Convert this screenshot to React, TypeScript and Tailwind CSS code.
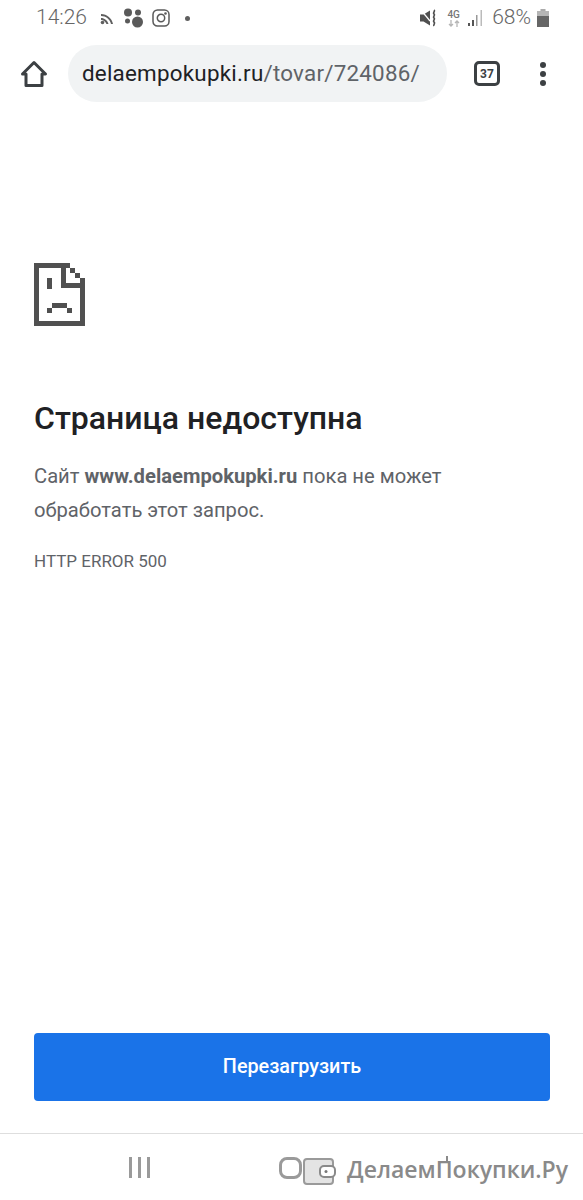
const FONT = { fontFamily: 'Roboto, sans-serif' }

function StatusBar() {
  return (
    <div className="flex h-9 shrink-0 items-center pl-9 pr-[34px] text-[21px] text-[#666666]">
      <span className="w-[64px] font-light">14:26</span>
      {/* cast */}
      <svg width="14" height="12" viewBox="0 0 14 12" className="mr-[9px] mt-px" fill="#5f5f5f">
        <path d="M1 1c6 0 11 4.500 12 10h-2C10 6.500 6 3 1 3z" />
        <path d="M1 5c3.500 0 6.500 2.500 7.500 6h-2C5.700 8.800 3.500 7 1 7z" />
        <circle cx="2.500" cy="9.500" r="1.800" />
      </svg>
      {/* dots */}
      <svg width="22" height="20" viewBox="0 0 22 20" className="mr-[7px]" fill="#5a5a5a">
        <circle cx="5" cy="4.500" r="4" />
        <circle cx="15" cy="4.500" r="3" />
        <circle cx="4.500" cy="13" r="2.500" />
        <circle cx="14.500" cy="14" r="5.500" />
      </svg>
      <svg width="18" height="18" viewBox="0 0 18 18" className="mr-[15px]" fill="none" stroke="#5a5a5a" strokeWidth="1.500">
        <rect x="1" y="1" width="16" height="16" rx="4.500" />
        <circle cx="9" cy="9" r="3.700" />
        <circle cx="13.500" cy="4.500" r="0.600" fill="#5a5a5a" />
      </svg>
      <span className="h-[5px] w-[5px] rounded-full bg-[#5f5f5f]" />
      <div className="flex-1" />
      {/* muted vibrate */}
      <svg width="17" height="18" viewBox="0 0 17 18" className="mr-[10px]" fill="#505050">
        <path d="M0 5.500h3.500L10 1.500v15l-6.500-4H0z" />
        <path d="M1 1l9 11" stroke="#ffffff" strokeWidth="1.200" />
        <path d="M14 1c1.800 1.500-1.800 2.500 0 4s-1.800 2.500 0 4 -1.800 2.500 0 4 -1 2.500 0 4" fill="none" stroke="#505050" strokeWidth="1.700" />
      </svg>
      <div className="mr-[8px] flex w-[13px] flex-col items-center leading-none">
        <span className="text-[10px] font-medium leading-[10px] text-[#777777]">4G</span>
        <svg width="12" height="7" viewBox="0 0 12 7" fill="none" stroke="#b5b5b5" strokeWidth="1.300">
          <path d="M3 0v6M1 4l2 2 2-2M9 7V1M7 3l2-2 2 2" />
        </svg>
      </div>
      <svg width="16" height="18" viewBox="0 0 16 18" className="mr-[8px]">
        <rect x="0" y="14" width="2" height="3" fill="#555555" />
        <rect x="4" y="11" width="2" height="6" fill="#555555" />
        <rect x="8" y="6" width="1.500" height="11" fill="#999999" />
        <rect x="12.500" y="1" width="1.500" height="16" fill="#bbbbbb" />
      </svg>
      <span className="mr-[6px] font-light">68%</span>
      <svg width="12" height="18" viewBox="0 0 12 18">
        <rect x="3.500" y="0" width="5" height="2" fill="#aaaaaa" />
        <rect x="0" y="2" width="12" height="5" fill="#b5b5b5" />
        <rect x="0" y="7" width="12" height="11" fill="#666666" />
      </svg>
    </div>
  )
}

function Toolbar() {
  return (
    <div className="flex shrink-0 items-center pb-[6px] pt-[9px]">
      <div className="flex w-[68px] justify-center">
        <svg width="28" height="28" viewBox="0 0 28 28" fill="none" stroke="#3c4043" strokeWidth="3" strokeLinejoin="round">
          <path d="M2.500 14 14 2.500 25.500 14H22v11.500H6V14z" />
        </svg>
      </div>
      <div className="flex h-[57px] w-[379px] items-center rounded-full bg-[#f1f3f4] pl-[14px]">
        <span className="text-[22.400px] tracking-[0.010em] text-[#202124]">
          delaempokupki.ru<span className="text-[#5f6368]">/tovar/724086/</span>
        </span>
      </div>
      <div className="ml-[27px] flex h-[25px] w-[26px] items-center justify-center rounded-[5px] border-[3px] border-[#3c4043] text-[12px] font-bold text-[#3c4043]">
        37
      </div>
      <div className="ml-[40px] flex flex-col gap-[3px]">
        <span className="h-[6px] w-[6px] rounded-full bg-[#3c4043]" />
        <span className="h-[6px] w-[6px] rounded-full bg-[#3c4043]" />
        <span className="h-[6px] w-[6px] rounded-full bg-[#3c4043]" />
      </div>
    </div>
  )
}

function SadPage() {
  return (
    <svg width="51" height="63" viewBox="0 0 51 63" fill="#505050" className="shrink-0">
      <path d="M0 0h36v5H32v15h19v43H0zM5 5v53h41V25H27V5z" fillRule="evenodd" />
      <rect x="36" y="5" width="5" height="5" />
      <rect x="41" y="10" width="5" height="5" />
      <rect x="46" y="15" width="5" height="5" />
      <rect x="13" y="15" width="5" height="11" />
      <rect x="18" y="40" width="15" height="5" />
      <rect x="13" y="45" width="5" height="5" />
      <rect x="33" y="45" width="5" height="5" />
    </svg>
  )
}

function NavBar() {
  return (
    <div className="flex h-[67px] shrink-0 items-start border-t border-t-[#dedede] pt-[23px]">
      <div className="ml-[129px] flex shrink-0 gap-[6px]">
        <span className="h-[21px] w-[3px] bg-[#9a9a9a]" />
        <span className="h-[21px] w-[3px] bg-[#9a9a9a]" />
        <span className="h-[21px] w-[3px] bg-[#9a9a9a]" />
      </div>
      <div className="ml-[129px] h-[22px] w-[23px] shrink-0 rounded-[8px] border-[3px] border-[#9a9a9a]" />
      {/* wallet logo */}
      <svg width="34" height="27" viewBox="0 0 34 27" className="ml-px mt-px shrink-0">
        <rect x="1" y="1" width="29" height="25" rx="3" fill="#e4e4e4" stroke="#9a9a9a" strokeWidth="2" />
        <rect x="17" y="8" width="15" height="11" rx="4" fill="#ffffff" stroke="#8a8a8a" strokeWidth="2" />
        <circle cx="23" cy="13.500" r="1.500" fill="#777777" />
      </svg>
      <span className="relative ml-[10px] whitespace-nowrap text-[23px] font-semibold leading-[24px] text-[#8a8a8a]" style={{ fontFamily: '"Open Sans", sans-serif' }}>
        ДелаемПокупки.Ру
        <span className="absolute left-[99px] top-[-1px] h-[6px] w-[2px] bg-[#8a8a8a]" />
      </span>
    </div>
  )
}

export default function App() {
  return (
    <div className="flex h-[1200px] w-[583px] flex-col overflow-hidden bg-white" style={FONT}>
      <StatusBar />
      <Toolbar />
      <main className="flex flex-1 flex-col px-[34px] pt-[155px]">
        <SadPage />
        <h1 className="mt-[72px] text-[32px] font-medium leading-[40px] text-[#202124]">Страница недоступна</h1>
        <p className="mt-[21px] whitespace-nowrap text-[20.200px] leading-[34px] text-[#5f6368]">
          Сайт <b className="font-bold">www.delaempokupki.ru</b> пока не может<br />обработать этот запрос.
        </p>
        <p className="mt-[24px] text-[17px] leading-[20px] text-[#5f6368]">HTTP ERROR 500</p>
        <div className="flex-1" />
        <button className="mb-[32px] h-[68px] w-[516px] rounded-[4px] bg-[#1a73e8] text-[19.800px] font-medium text-white">
          Перезагрузить
        </button>
      </main>
      <NavBar />
    </div>
  )
}
